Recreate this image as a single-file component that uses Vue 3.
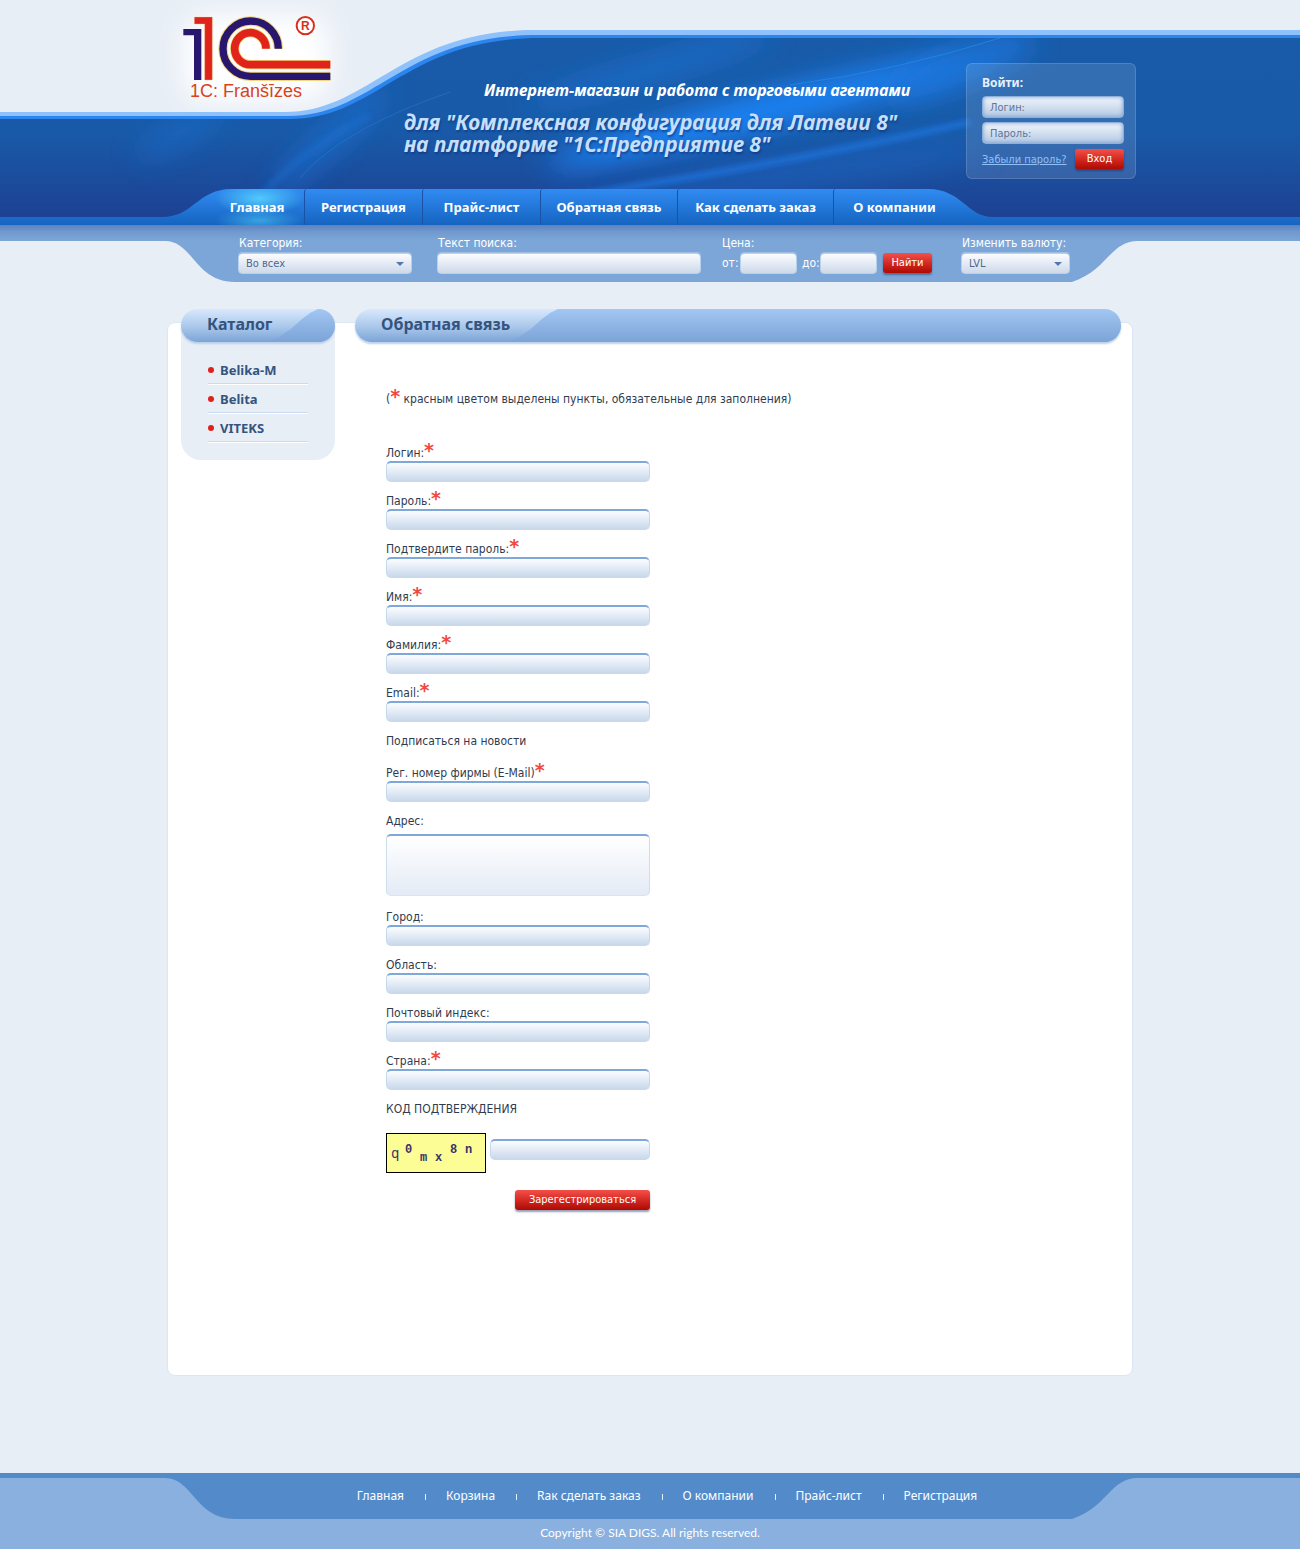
<script setup>
const menu = ['Главная', 'Регистрация', 'Прайс-лист', 'Обратная связь', 'Как сделать заказ', 'О компании']
const catalog = ['Belika-M', 'Belita', 'VITEKS']
const footerLinks = ['Главная', 'Корзина', 'Rак сделать заказ', 'О компании', 'Прайс-лист', 'Регистрация']

const fields = [
  { id: 'login', label: 'Логин:', required: true, type: 'text' },
  { id: 'password', label: 'Пароль:', required: true, type: 'password' },
  { id: 'confirm', label: 'Подтвердите пароль:', required: true, type: 'password' },
  { id: 'name', label: 'Имя:', required: true, type: 'text' },
  { id: 'surname', label: 'Фамилия:', required: true, type: 'text' },
  { id: 'email', label: 'Email:', required: true, type: 'email' },
  { id: 'news', label: 'Подписаться на новости', type: 'note' },
  { id: 'regnum', label: 'Рег. номер фирмы (E-Mail)', required: true, type: 'text' },
  { id: 'address', label: 'Адрес:', type: 'area' },
  { id: 'city', label: 'Город:', type: 'text' },
  { id: 'region', label: 'Область:', type: 'text' },
  { id: 'zip', label: 'Почтовый индекс:', type: 'text' },
  { id: 'country', label: 'Страна:', required: true, type: 'text' },
]
</script>

<template>
  <div class="page">
    <header class="header">
      <svg class="backdrop" width="1300" height="282" viewBox="0 0 1300 282" aria-hidden="true">
        <defs>
          <linearGradient id="deep" x1="0" y1="0" x2="0" y2="1">
            <stop offset="0" stop-color="#185ba8" />
            <stop offset="0.5" stop-color="#195aa8" />
            <stop offset="1" stop-color="#1e3f91" />
          </linearGradient>
          <linearGradient id="bar" x1="0" y1="0" x2="0" y2="1">
            <stop offset="0" stop-color="#318bf2" />
            <stop offset="1" stop-color="#1564c0" />
          </linearGradient>
          <linearGradient id="strip" x1="0" y1="0" x2="0" y2="1">
            <stop offset="0" stop-color="#5f82bd" />
            <stop offset="0.12" stop-color="#7099cf" />
            <stop offset="0.28" stop-color="#7da6d8" />
            <stop offset="1" stop-color="#7da6d8" />
          </linearGradient>
          <filter id="soft" x="-50%" y="-200%" width="200%" height="500%"><feGaussianBlur stdDeviation="14" /></filter>
          <filter id="thin" x="-50%" y="-100%" width="200%" height="300%"><feGaussianBlur stdDeviation="3" /></filter>
          <clipPath id="sea"><path d="M-2000 119H290C378 119 405 38 540 38H3300V225H-2000Z" /></clipPath>
        </defs>
        <rect x="184" y="16" width="144" height="84" rx="20" fill="#fff" filter="url(#soft)" />
        <path d="M-2000 112H285C370 112 400 30 535 30H3300V225H-2000Z" fill="#8fc2fb" />
        <path d="M-2000 116H288C375 116 402 35 538 35H3300V225H-2000Z" fill="#2c84ee" />
        <path d="M-2000 119H290C378 119 405 38 540 38H3300V225H-2000Z" fill="url(#deep)" />
        <g clip-path="url(#sea)">
          <ellipse cx="760" cy="112" rx="220" ry="16" transform="rotate(-14 760 112)" fill="#1a88ff" filter="url(#soft)" />
          <ellipse cx="960" cy="68" rx="80" ry="16" transform="rotate(-22 960 68)" fill="#1a76dc" filter="url(#soft)" />
          <ellipse cx="650" cy="70" rx="130" ry="8" transform="rotate(-16 650 70)" fill="#1a74d8" filter="url(#soft)" />
          <ellipse cx="180" cy="133" rx="50" ry="10" transform="rotate(-30 180 133)" fill="#1b70cf" opacity="0.7" filter="url(#soft)" />
          <ellipse cx="330" cy="140" rx="80" ry="10" transform="rotate(-42 330 140)" fill="#1c72d4" opacity="0.9" filter="url(#soft)" />
          <ellipse cx="800" cy="175" rx="190" ry="14" transform="rotate(-8 800 175)" fill="#1b69c8" opacity="0.6" filter="url(#soft)" />
          <path d="M262 196Q300 150 370 116" fill="none" stroke="#1e74d8" stroke-width="6" opacity="0.45" filter="url(#thin)" />
          <path d="M560 198Q780 165 970 122" fill="none" stroke="#1c77e2" stroke-width="5" filter="url(#thin)" />
          <path d="M300 178Q340 130 450 92" fill="none" stroke="#3a8de0" opacity="0.35" />
          <path d="M790 85Q900 70 1000 38" fill="none" stroke="#2c86e4" opacity="0.8" />
        </g>
        <path d="M-2000 217H162C194 217 197 189 232 189H928C962 189 967 217 993 217H3300V225H-2000Z" fill="url(#bar)" />
        <path d="M-2000 225H3300V241H1138C1110 241 1108 270 1072 282H235C195 282 193 241 165 241H-2000Z" fill="url(#strip)" />
      </svg>

      <div class="masthead">
        <a class="logo" href="#" aria-label="1C">
          <svg width="148" height="67" viewBox="68 45 444 201" aria-hidden="true">
            <g fill="none" stroke="#f3d77a" stroke-width="28">
              <path d="M354 146A83 83 0 1 0 271 229H510" />
              <path d="M317 146A47 48 0 1 0 271 194H510" />
            </g>
            <path d="M69 87H123V240H101V106H69Z" fill="#29166f" />
            <path d="M102 51H156V240H133V72H102Z" fill="#e0241b" stroke="#f3d77a" stroke-width="1" />
            <path d="M354 146A83 83 0 1 0 271 229H510" fill="none" stroke="#29166f" stroke-width="22" />
            <path d="M317 146A47 48 0 1 0 271 194H510" fill="none" stroke="#e0241b" stroke-width="23" />
            <circle cx="435" cy="77" r="26" fill="#fff" stroke="#d8301c" stroke-width="6" />
            <text x="435" y="90" class="reg">R</text>
          </svg>
          <span class="logo-name">1C: Franšīzes</span>
        </a>
        <div class="slogan">
          <p class="lead">Интернет-магазин и работа с торговыми агентами</p>
          <p class="sub">для "Комплексная конфигурация для Латвии 8"<br />на платформе "1С:Предприятие 8"</p>
        </div>
        <form class="login" @submit.prevent>
          <h2>Войти:</h2>
          <input type="text" aria-label="Логин" placeholder="Логин:" />
          <input type="password" aria-label="Пароль" placeholder="Пароль:" />
          <div class="login-row">
            <a href="#">Забыли пароль?</a>
            <button class="red">Вход</button>
          </div>
        </form>
      </div>

      <nav class="menu">
        <a v-for="(item, i) in menu" :key="item" href="#" :class="{ active: i === 0 }">{{ item }}</a>
      </nav>

      <form class="search" @submit.prevent>
        <div>
          <label for="cat">Категория:</label>
          <span class="pick"><select id="cat"><option>Во всех</option></select></span>
        </div>
        <div>
          <label for="query">Текст поиска:</label>
          <input id="query" class="query" type="text" />
        </div>
        <div>
          <span class="caption">Цена:</span>
          <div class="price">
            <label for="from">от:</label><input id="from" type="text" />
            <label for="to">до:</label><input id="to" type="text" />
            <button class="red">Найти</button>
          </div>
        </div>
        <div>
          <label for="cur">Изменить валюту:</label>
          <span class="pick short"><select id="cur"><option>LVL</option></select></span>
        </div>
      </form>
    </header>

    <main class="card">
      <aside class="side">
        <h2 class="pill side-pill"><span>Каталог</span></h2>
        <ul>
          <li v-for="c in catalog" :key="c"><a href="#">{{ c }}</a></li>
        </ul>
      </aside>
      <section>
        <h1 class="pill main-pill"><span>Обратная связь</span></h1>
        <form class="form" @submit.prevent>
          <p class="hint">(<i class="star">*</i> красным цветом выделены пункты, обязательные для заполнения)</p>
          <div v-for="f in fields" :key="f.id" class="field" :class="f.type">
            <p v-if="f.type === 'note'">{{ f.label }}</p>
            <template v-else>
              <label :for="f.id">{{ f.label }}<i v-if="f.required" class="star">*</i></label>
              <textarea v-if="f.type === 'area'" :id="f.id"></textarea>
              <input v-else :id="f.id" :type="f.type" />
            </template>
          </div>
          <label class="code-label" for="code">КОД ПОДТВЕРЖДЕНИЯ</label>
          <div class="code">
            <svg class="captcha" width="100" height="40" viewBox="0 0 100 40" role="img" aria-label="Код">
              <rect x="0.5" y="0.5" width="99" height="39" fill="#fdfd96" stroke="#000" />
              <text x="5" y="25" class="plain">q</text>
              <text x="19" y="20">0</text>
              <text x="34" y="28">m</text>
              <text x="49" y="28">x</text>
              <text x="64" y="20">8</text>
              <text x="79" y="20">n</text>
            </svg>
            <input id="code" type="text" />
          </div>
          <button class="red submit">Зарегестрироваться</button>
        </form>
      </section>
    </main>

    <footer class="footer">
      <svg class="backdrop" width="1300" height="46" viewBox="0 0 1300 46" aria-hidden="true">
        <path d="M-2000 0H3300V5H1138C1110 5 1108 34 1072 46H235C195 46 193 5 165 5H-2000Z" fill="#538bca" />
      </svg>
      <nav class="links">
        <a v-for="l in footerLinks" :key="l" href="#">{{ l }}</a>
      </nav>
      <p class="copy">Copyright © SIA DIGS. All rights reserved.</p>
    </footer>
  </div>
</template>

<style>
body {
  margin: 0;
  background: #e8eef6;
}
</style>

<style scoped>
.page {
  min-width: 1000px;
  font-family: "DejaVu Sans Condensed", "DejaVu Sans", Tahoma, sans-serif;
  font-size: 12px;
  line-height: 16px;
  color: #2f3c50;
}
p, h1, h2, ul {
  margin: 0;
  padding: 0;
}
input, select, textarea, button {
  box-sizing: border-box;
  font: inherit;
  margin: 0;
}
a {
  text-decoration: none;
}

.header, .footer {
  position: relative;
  overflow: hidden;
}
.backdrop {
  position: absolute;
  top: 0;
  left: 50%;
  margin-left: -650px;
  overflow: visible;
}
.masthead, .menu, .search, .links {
  position: relative;
  box-sizing: border-box;
  max-width: 972px;
  margin: 0 auto;
}
.slogan, .menu, .pill, .side, .footer, .login h2 {
  font-family: "Noto Sans", "Open Sans", sans-serif;
}

/* masthead */
.masthead {
  display: flex;
  height: 189px;
  padding-left: 19px;
}
.logo {
  width: 148px;
  padding-top: 15px;
}
.logo svg {
  display: block;
}
.reg {
  font: bold 36px "Liberation Sans", sans-serif;
  text-anchor: middle;
  fill: #d8301c;
}
.logo-name {
  display: block;
  padding-left: 7px;
  font: 18px/18px "Liberation Sans", Arial, sans-serif;
  color: #d9421c;
}
.slogan {
  flex: 1;
  padding: 80px 0 0 73px;
  font-weight: 700;
  font-style: italic;
  white-space: nowrap;
}
.lead {
  padding-left: 80px;
  font-size: 16px;
  line-height: 20px;
  color: #fff;
}
.sub {
  padding-top: 11px;
  font-size: 21px;
  line-height: 22px;
  color: #c5dffc;
  text-shadow: 1px 2px 2px rgba(10, 50, 120, 0.6);
}
.login {
  box-sizing: border-box;
  width: 170px;
  height: 116px;
  margin-top: 63px;
  padding: 11px 11px 0 15px;
  border: 1px solid rgba(255, 255, 255, 0.14);
  border-radius: 6px;
  background: rgba(255, 255, 255, 0.12);
}
.login h2 {
  font-size: 12px;
  line-height: 16px;
  color: #e6f1ff;
}
.login input {
  display: block;
  width: 142px;
  height: 22px;
  margin-top: 5px;
  padding: 0 7px;
  border: 1px solid #8db0da;
  border-radius: 4px;
  background: linear-gradient(#f2f6fb, #b3c9e4);
  box-shadow: inset 0 0 4px #7a9ccb;
  font-size: 11px;
}
.login input + input {
  margin-top: 4px;
}
.login input::placeholder {
  color: #5f7596;
  opacity: 1;
}
.login-row {
  display: flex;
  justify-content: space-between;
  padding-top: 5px;
}
.login-row a {
  padding-top: 3px;
  font-size: 11px;
  color: #8fc0fa;
  text-decoration: underline;
  white-space: nowrap;
}
.red {
  width: 49px;
  height: 20px;
  padding: 0;
  border: 0;
  border-radius: 3px;
  background: linear-gradient(#f4504a, #d42a22 50%, #ac0a04);
  box-shadow: 0 2px 2px rgba(20, 40, 90, 0.45);
  font-size: 11px;
  line-height: 18px;
  color: #fff;
}

/* menu */
.menu {
  display: grid;
  grid-template-columns: 90px 118px 118px 137px 156px 122px;
  height: 36px;
  padding-left: 50px;
}
.menu a {
  border-left: 1px solid #1a52a6;
  border-radius: 3px;
  font-weight: 700;
  font-size: 13px;
  line-height: 36px;
  text-align: center;
  color: #fff;
  white-space: nowrap;
}
.menu .active {
  padding-right: 5px;
  border-left-color: transparent;
  background:
    radial-gradient(ellipse 45px 17px at 50% 26%, rgba(84, 206, 252, 0.95), transparent),
    radial-gradient(ellipse 45px 13px at 50% 88%, rgba(66, 176, 232, 0.8), transparent);
}

/* search strip */
.search {
  display: grid;
  grid-template-columns: 199px 284px 240px 109px;
  height: 57px;
  padding: 10px 0 0 74px;
  color: #fff;
}
.search label, .caption {
  display: block;
  height: 18px;
  padding-left: 1px;
  line-height: 16px;
  white-space: nowrap;
}
.search input, .search select {
  display: block;
  height: 21px;
  padding: 0 7px;
  border: 1px solid #b9d0ec;
  border-radius: 4px;
  background: linear-gradient(#fbfcfe, #cdd9ea);
  box-shadow: 0 -1px 0 #a0bee3;
}
.query {
  width: 264px;
}
.pick {
  position: relative;
  display: block;
  width: 174px;
}
.pick.short {
  width: 109px;
}
.pick select {
  appearance: none;
  width: 100%;
  font-size: 11px;
  line-height: 16px;
  color: #50678a;
}
.pick::after {
  content: "";
  position: absolute;
  right: 8px;
  top: 9px;
  border: 4px solid transparent;
  border-top-color: #5378ac;
  border-bottom: 0;
}
.price {
  display: flex;
}
.price label {
  width: 18px;
  line-height: 20px;
}
.price input {
  width: 57px;
  margin-right: 4px;
}
.price .red {
  margin-left: 2px;
}

/* card */
.card {
  display: grid;
  grid-template-columns: 154px 1fr;
  gap: 20px;
  box-sizing: border-box;
  max-width: 966px;
  margin: 40px auto 97px;
  padding: 0 11px 165px 13px;
  border: 1px solid #dce7f4;
  border-radius: 8px;
  background: #fff;
}
.side, .card section {
  margin-top: -14px;
}
.side {
  align-self: start;
  border-radius: 20px;
  background: #e8eef6;
}
.pill {
  position: relative;
  overflow: hidden;
  height: 33px;
  padding-left: 26px;
  border-radius: 17px;
  background: linear-gradient(#d8e8fd, #a9c7ea 55%, #7ba4d7);
  box-shadow: 0 2px 2px #bccfea;
  font-size: 16px;
  line-height: 31px;
  color: #34547f;
}
.pill::before {
  content: "";
  position: absolute;
  top: 0;
  bottom: 0;
  right: 0;
  background: linear-gradient(#a3c7f3, #8db3e3 55%, #7ba4d7);
  clip-path: polygon(0 100%, 12px 85%, 24px 60%, 35px 30%, 43px 12%, 51px 0, 100% 0, 100% 100%);
}
.side-pill::before {
  left: 86px;
}
.main-pill::before {
  left: 152px;
}
.pill span {
  position: relative;
}
.side ul {
  list-style: none;
  padding: 14px 27px 17px;
}
.side li {
  position: relative;
  height: 27px;
  padding-left: 12px;
  border-bottom: 1px solid #c8dbf0;
  box-shadow: 0 1px 0 #fff;
  margin-bottom: 1px;
  line-height: 28px;
}
.side li::before {
  content: "";
  position: absolute;
  left: 0;
  top: 11px;
  width: 6px;
  height: 6px;
  border-radius: 50%;
  background: #e0201c;
}
.side li a {
  font-weight: 700;
  font-size: 13px;
  color: #34547f;
}

/* form */
.form {
  width: 264px;
  padding: 49px 0 0 31px;
}
.hint {
  height: 16px;
  margin-bottom: 38px;
  white-space: nowrap;
}
.star {
  font-family: "DejaVu Sans", sans-serif;
  font-style: normal;
  font-weight: 700;
  font-size: 19px;
  line-height: 1px;
  color: #ee4a42;
}
.field {
  padding-bottom: 11px;
}
.field label, .code-label {
  display: block;
  height: 16px;
}
.note {
  padding-bottom: 16px;
}
.form input, .form textarea {
  display: block;
  width: 100%;
  height: 21px;
  padding: 0 6px;
  border: 1px solid #c9d9ed;
  border-top: 2px solid #7fa7d9;
  border-radius: 5px;
  background: linear-gradient(#fbfdff, #c9d8eb);
}
.form textarea {
  height: 62px;
  margin-top: 5px;
  background: linear-gradient(#fff, #e4ebf5);
  border-color: #7fa7d9 #cfdeee #d9e4f1;
  resize: none;
}
.area {
  padding-bottom: 13px;
}
.code {
  display: flex;
  align-items: flex-start;
  gap: 4px;
  padding: 16px 0 17px;
}
.captcha {
  flex: none;
}
.captcha text {
  font: bold 12px "Liberation Mono", monospace;
  fill: #3b3268;
}
.captcha .plain {
  font-weight: 400;
  font-size: 14px;
}
.code input {
  margin-top: 6px;
}
.submit {
  display: block;
  width: 135px;
  margin-left: auto;
}

/* footer */
.footer {
  background: #89b0de;
}
.links {
  display: flex;
  justify-content: center;
  height: 46px;
  padding-left: 34px;
  line-height: 46px;
}
.links a {
  position: relative;
  padding: 0 21px;
  color: #fff;
  white-space: nowrap;
}
.links a + a::before {
  content: "";
  position: absolute;
  left: 0;
  top: 21px;
  width: 1px;
  height: 6px;
  background: #e5f0ff;
}
.copy {
  padding: 6px 0 8px;
  font-family: Lato, "Noto Sans", sans-serif;
  text-align: center;
  color: #fff;
}
</style>
